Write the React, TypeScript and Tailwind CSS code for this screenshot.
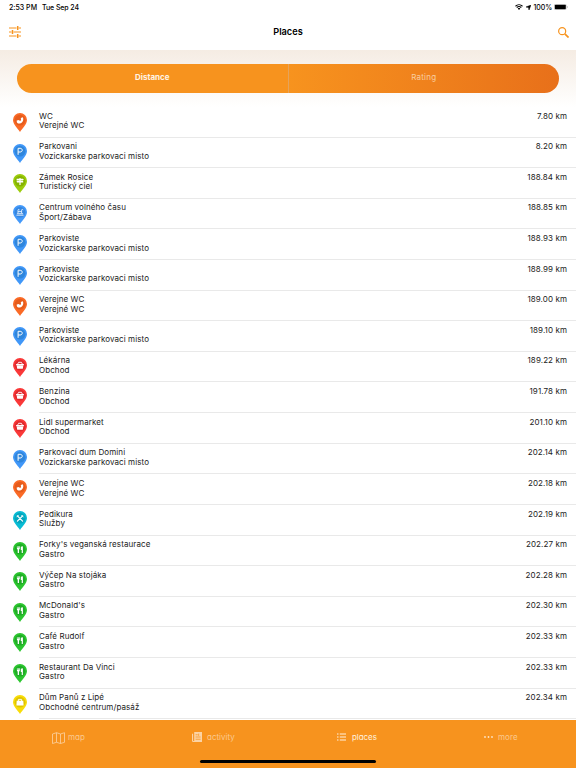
import React from 'react';

type Kind = 'wc' | 'parking' | 'sight' | 'sport' | 'shop' | 'service' | 'gastro' | 'mall';

interface Place {
  name: string;
  category: string;
  distance: string;
  kind: Kind;
}

const places: Place[] = [
  { name: 'WC', category: 'Verejné WC', distance: '7.80 km', kind: 'wc' },
  { name: 'Parkovani', category: 'Vozickarske parkovaci misto', distance: '8.20 km', kind: 'parking' },
  { name: 'Zámek Rosice', category: 'Turistický ciel', distance: '188.84 km', kind: 'sight' },
  { name: 'Centrum volného času', category: 'Šport/Zábava', distance: '188.85 km', kind: 'sport' },
  { name: 'Parkoviste', category: 'Vozickarske parkovaci misto', distance: '188.93 km', kind: 'parking' },
  { name: 'Parkoviste', category: 'Vozickarske parkovaci misto', distance: '188.99 km', kind: 'parking' },
  { name: 'Verejne WC', category: 'Verejné WC', distance: '189.00 km', kind: 'wc' },
  { name: 'Parkoviste', category: 'Vozickarske parkovaci misto', distance: '189.10 km', kind: 'parking' },
  { name: 'Lékárna', category: 'Obchod', distance: '189.22 km', kind: 'shop' },
  { name: 'Benzina', category: 'Obchod', distance: '191.78 km', kind: 'shop' },
  { name: 'Lidl supermarket', category: 'Obchod', distance: '201.10 km', kind: 'shop' },
  { name: 'Parkovací dum Domini', category: 'Vozickarske parkovaci misto', distance: '202.14 km', kind: 'parking' },
  { name: 'Verejne WC', category: 'Verejné WC', distance: '202.18 km', kind: 'wc' },
  { name: 'Pedikura', category: 'Služby', distance: '202.19 km', kind: 'service' },
  { name: "Forky's veganská restaurace", category: 'Gastro', distance: '202.27 km', kind: 'gastro' },
  { name: 'Výčep Na stojáka', category: 'Gastro', distance: '202.28 km', kind: 'gastro' },
  { name: "McDonald's", category: 'Gastro', distance: '202.30 km', kind: 'gastro' },
  { name: 'Café Rudolf', category: 'Gastro', distance: '202.33 km', kind: 'gastro' },
  { name: 'Restaurant Da Vinci', category: 'Gastro', distance: '202.33 km', kind: 'gastro' },
  { name: 'Dům Panů z Lipé', category: 'Obchodné centrum/pasáž', distance: '202.34 km', kind: 'mall' },
];

const pinColors: Record<Kind, [string, string]> = {
  wc: ['#fa6a26', '#e65c1c'],
  parking: ['#4097f8', '#2f86dc'],
  sight: ['#9ccc0c', '#86b300'],
  sport: ['#4399fa', '#3586e0'],
  shop: ['#fa3838', '#df2a2e'],
  service: ['#08bcd4', '#05a5bd'],
  gastro: ['#2cc62f', '#1fac26'],
  mall: ['#f8dc08', '#dfc400'],
};

const glyphs: Record<Kind, React.ReactNode> = {
  wc: <path d="M3.700 7.400 6.100 6.900l.7 1.200c1-.1 1.300-.6 1.200-1.500l-.2-1.500 2.100-.9c.6 1.600.5 3.400-.6 4.700-1.100 1.300-3 1.900-4.600 1.400-.8-.6-1-1.700-1-2.900z" fill="#fff" />,
  parking: <path d="M5.100 10.800V4.300h2.100c2.700 0 2.700 3.700 0 3.700H5.100" fill="none" stroke="#fff" strokeWidth="1" />,
  sight: <path d="M3.600 4.700h6.300l.9.900-.9.900H3.600zM4.200 7.100h6v1.500h-6l-.8-.75zM6.400 4h1.200v6.900H6.400z" fill="#fff" />,
  sport: (
    <g fill="none" stroke="#e8f3ff" strokeWidth=".9">
      <path d="M3.400 10.200h7.200M3.900 8.700h6.200M5 8.200V5.200c0-1 1.400-1 1.400 0M8.600 8.200V5.200c0-1 1.400-1 1.400 0M5 6.600h3.600" />
    </g>
  ),
  shop: (
    <g>
      <path d="M4.500 6.300 5.600 4.300h2.800l1.100 2" fill="none" stroke="#fff" strokeWidth=".9" />
      <path d="M3.100 6.100h7.800v1.100H3.100zM3.700 7.600h6.600l-.5 3.100H4.200z" fill="#fff" />
    </g>
  ),
  service: (
    <g stroke="#fff" strokeWidth="1.200" strokeLinecap="round">
      <path d="M4.400 4.800 9.600 10.100M9.600 4.800 4.400 10.100" />
      <path d="M3.800 5.900 5.500 4.200M8.600 4.300l1.700 1.700" strokeWidth=".8" />
    </g>
  ),
  gastro: <path d="M3.900 4.300h.7v1.800h.4V4.300h.7v1.800h.4V4.300h.7v2.500l-.8 1v3.100H4.700V7.800l-.8-1zM7.800 4.700l2.100-.5v6.700H8.700V8.100h-.9z" fill="#fff" />,
  mall: (
    <g>
      <path d="M5.400 6V4.400h3.200V6" fill="none" stroke="#fff" strokeWidth=".9" />
      <path d="M3.700 5.800h6.600l.3 4.600H3.400z" fill="#fff" />
    </g>
  ),
};

const Pin: React.FC<{ kind: Kind }> = ({ kind }) => {
  const [outer, inner] = pinColors[kind];
  return (
    <svg viewBox="0 0 14 19" className="w-[14px] h-[19px]">
      <path d="M7 0a7 7 0 0 0-7 7c0 4.300 4.700 8.300 7 12 2.300-3.700 7-7.700 7-12a7 7 0 0 0-7-7z" fill={outer} />
      <circle cx="7" cy="7.200" r="5.400" fill={inner} />
      {glyphs[kind]}
    </svg>
  );
};

const PlaceRow: React.FC<{ place: Place }> = ({ place }) => (
  <li className="flex h-[30.620px] shrink-0 pl-[13px]">
    <div className="w-[26px] pt-[6px]">
      <Pin kind={place.kind} />
    </div>
    <div className="flex flex-1 justify-between border-b border-[#e9e9e9] pr-[9px] pt-[4.600px] text-[8px] leading-[9.600px] tracking-[0.090px]">
      <div>
        <p>{place.name}</p>
        <p>{place.category}</p>
      </div>
      <span>{place.distance}</span>
    </div>
  </li>
);

const StatusBar: React.FC = () => (
  <div className="flex h-[14px] items-center justify-between pl-[9px] pr-[8px] text-[7px] font-medium leading-none text-black">
    <div className="flex gap-[5px] tracking-[-0.100px]">
      <span className="tracking-[0.020px]">2:53 PM</span>
      <span>Tue Sep 24</span>
    </div>
    <div className="flex items-center gap-[2px]">
      <svg viewBox="0 0 16 12" className="h-[6px] w-[8px]" fill="none" stroke="#000" strokeWidth="2.200">
        <path d="M1 4.500c4-4 10-4 14 0M3.500 7.200c2.500-2.500 6.500-2.500 9 0" />
        <path d="M5.500 9.200c1.500-1.300 3.500-1.300 5 0L8 12z" fill="#000" stroke="none" />
      </svg>
      <svg viewBox="0 0 10 10" className="mx-px h-[5px] w-[5px]">
        <path d="M10 0 6 10 5 5 0 4z" stroke="#000" />
      </svg>
      <span className="tracking-[-0.100px]">100%</span>
      <svg viewBox="0 0 14 6" className="h-[6px] w-[14px]">
        <rect x=".2" y=".2" width="12.200" height="5.600" rx="1.400" fill="#fff" stroke="#999" strokeWidth=".4" />
        <rect x=".8" y=".8" width="11" height="4.400" rx=".8" />
        <path d="M13 2v2c.8-.3.8-1.700 0-2z" fill="#888" />
      </svg>
    </div>
  </div>
);

const Header: React.FC = () => (
  <div className="grid h-9 grid-cols-3 items-center pl-[9px] pr-[7px]">
    <svg viewBox="0 0 12 12" className="h-[12px] w-[12px]" stroke="#f7931e" fill="none">
      <path d="M0 2h7.500M9.500 2H12M0 6h2.500M4.500 6H12M0 10h7.500M9.500 10H12" strokeWidth="1.200" />
      <path d="M8.700 0v4M3.500 4v4M8.700 8v4" strokeWidth="1.500" />
    </svg>
    <h1 className="-ml-[2px] text-center text-[9.200px] font-semibold leading-none text-black">Places</h1>
    <svg viewBox="0 0 10 10" className="h-[11px] w-[11px] justify-self-end" stroke="#f7931e" fill="none">
      <circle cx="3.800" cy="3.800" r="3.200" strokeWidth="1.100" />
      <path d="m6.200 6.200 3.400 3.400" strokeWidth="1.500" />
    </svg>
  </div>
);

const SortTabs: React.FC = () => (
  <div className="h-[57px] shrink-0 bg-linear-to-b from-[#f5ece3] to-white px-[17px] pt-[14px]">
    <div className="flex h-[28.500px] overflow-hidden rounded-full text-[8px] leading-none">
      <button className="flex-1 border-r border-[#e5a35a] bg-[#f7931e] pb-[3px] font-bold text-[#fff4e6]">Distance</button>
      <button className="flex-1 bg-linear-to-r from-[#f7931e] to-[#e8701a] pb-[3px] tracking-[0.200px] text-[#f9cda0]">Rating</button>
    </div>
  </div>
);

const TabBar: React.FC = () => (
  <nav className="relative h-[48.300px] shrink-0 bg-[#f7931e] text-[8px] leading-none text-[#fbc98f] [font-feature-settings:'cv11']">
    <div className="flex h-[34px] items-center pl-[52px]">
      <div className="flex w-[140px] items-center gap-[3px]">
        <svg viewBox="0 0 13 12" className="mt-[2px] h-[12px] w-[13px]" fill="none" stroke="#fbd3a5" strokeWidth=".8">
          <path d="M.5 2 4.500.7l4 1.300 4-1.300v9.600l-4 1.200-4-1.200-4 1.200zM4.500.7v9.600M8.500 2v9.500" />
        </svg>
        <span className="tracking-[0.100px]">map</span>
      </div>
      <div className="flex w-[145px] items-center gap-[5px]">
        <svg viewBox="0 0 9 9" className="mt-px h-[10px] w-[10px]">
          <path d="M2 0h7v9H1.200Q0 9 0 8V1.500h1V8h1z" fill="#fbd3a5" />
          <path d="M3.200 2.500h2M3.200 4.500h4.500M3.200 6.500h4.500M6 1.500v2" stroke="#f7931e" strokeWidth=".7" />
        </svg>
        <span>activity</span>
      </div>
      <div className="flex w-[147px] items-center gap-[6px] text-[#fff1df]">
        <svg viewBox="0 0 9 8" className="mt-px h-[8px] w-[9px]" stroke="#fff1df">
          <path d="M0 1h1.500M0 4h1.500M0 7h1.500M2.800 1H9M2.800 4H9M2.800 7H9" />
        </svg>
        <span className="tracking-[-0.050px]">places</span>
      </div>
      <div className="flex items-center gap-[5px]">
        <svg viewBox="0 0 9 2" className="mt-px h-[2px] w-[9px]" fill="#fde3c4">
          <circle cx="1" cy="1" r=".9" />
          <circle cx="4.500" cy="1" r=".9" />
          <circle cx="8" cy="1" r=".9" />
        </svg>
        <span className="tracking-[0.100px]">more</span>
      </div>
    </div>
    <div className="absolute bottom-[5px] left-[200px] h-[3px] w-[176px] rounded-full bg-black" />
  </nav>
);

const App: React.FC = () => {
  return (
    <div className="flex h-[768px] w-[576px] flex-col overflow-hidden bg-white font-['Inter',sans-serif] text-[#222]">
      <StatusBar />
      <Header />
      <SortTabs />
      <ul className="flex flex-1 flex-col overflow-hidden">
        {places.map((place, i) => (
          <PlaceRow key={i} place={place} />
        ))}
      </ul>
      <TabBar />
    </div>
  );
};

export default App;
